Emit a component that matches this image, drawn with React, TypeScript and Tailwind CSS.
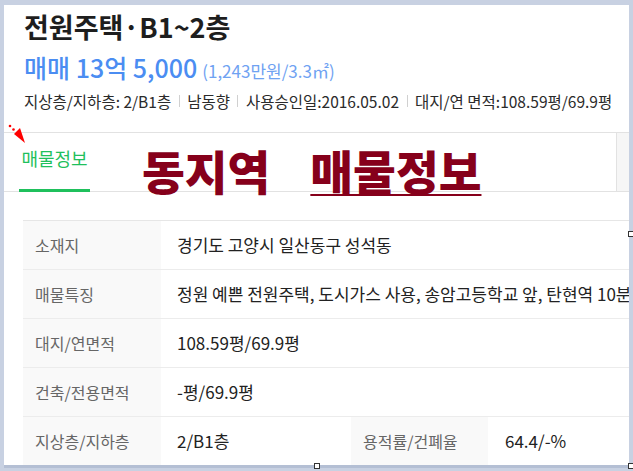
import React from 'react';

const rows: { label: string; value: string }[] = [
  { label: '소재지', value: '경기도 고양시 일산동구 성석동' },
  { label: '매물특징', value: '정원 예쁜 전원주택, 도시가스 사용, 송암고등학교 앞, 탄현역 10분' },
  { label: '대지/연면적', value: '108.59평/69.9평' },
  { label: '건축/전용면적', value: '-평/69.9평' },
];

const infos = ['지상층/지하층: 2/B1층', '남동향', '사용승인일:2016.05.02', '대지/연 면적:108.59평/69.9평'];

function Handle({ className }: { className: string }) {
  return <div className={`absolute w-[6px] h-[6px] bg-white border border-[#333] ${className}`} />;
}

export default function App() {
  return (
    <div className="relative w-[633px] h-[471px] overflow-hidden bg-[#c8d1e2] font-['Noto_Sans_CJK_KR',sans-serif]">
      <div className="ml-[4px] mt-[5px] w-[625px] h-[460px] bg-white overflow-hidden shadow-[0_3px_0_#b4bfd4]">
        {/* Header */}
        <div className="pl-[20px] pt-[4px]">
          <h1 className="text-[27px] leading-[36px] font-bold text-[#1e1e1e]">전원주택·B1~2층</h1>
          <div className="mt-[6px] flex items-baseline h-[32px] leading-[32px]">
            <span className="text-[25px] font-medium text-[#4b8df2]">매매 13억 5,000</span>
            <span className="ml-[5px] text-[17px] text-[#6fa2f2]">(1,243만원/3.3㎡)</span>
          </div>
          <div className="mt-[8px] flex items-center text-[15.5px] leading-[20px] text-[#2a2a2a] whitespace-nowrap">
            {infos.map((t, i) => (
              <React.Fragment key={t}>
                {i > 0 && <span className="mx-[7.5px] h-[12px] w-px bg-[#d0d0d0]" />}
                <span>{t}</span>
              </React.Fragment>
            ))}
          </div>
        </div>

        {/* Tabs */}
        <div className="mt-[21px] flex h-[60px] border-y border-[#e2e2e2]">
          <div className="ml-[15px] w-[71px] flex flex-col items-center justify-end">
            <span className="text-[18px] leading-[20px] text-[#1fc05c] mb-[21px]">매물정보</span>
            <div className="h-[3px] w-full bg-[#1fc05c] mb-[-1px]" />
          </div>
          <div className="ml-auto w-[13px] border-l border-[#e2e2e2] bg-[#f6f6f6]" />
        </div>

        {/* Table */}
        <div className="mt-[28px] ml-[19px] w-[640px] border-t border-[#e6e6e6]">
          {rows.map((r) => (
            <div key={r.label} className="flex h-[49px] border-b border-[#ececec]">
              <div className="w-[138px] shrink-0 bg-[#f9f9f9] pl-[12px] flex items-center text-[16px] text-[#666]">{r.label}</div>
              <div className="pl-[16px] flex items-center text-[17px] text-[#222] whitespace-nowrap">{r.value}</div>
            </div>
          ))}
          <div className="flex h-[49px] border-b border-[#ececec]">
            <div className="w-[138px] shrink-0 bg-[#f9f9f9] pl-[12px] flex items-center text-[16px] text-[#666]">지상층/지하층</div>
            <div className="w-[190px] shrink-0 pl-[16px] flex items-center text-[17px] text-[#222]">2/B1층</div>
            <div className="w-[137px] shrink-0 bg-[#f9f9f9] pl-[12px] flex items-center text-[16px] text-[#666]">용적률/건폐율</div>
            <div className="pl-[17px] flex items-center text-[17px] text-[#222]">64.4/-%</div>
          </div>
        </div>
      </div>

      {/* Annotation overlay */}
      <svg className="absolute left-[6px] top-[122px]" width="24" height="24" viewBox="0 0 24 24">
        <circle cx="4" cy="4" r="1.3" fill="#f00" />
        <circle cx="7.5" cy="7.5" r="1.3" fill="#f00" />
        <polygon points="8,12 14,6 19,21" fill="#f00" />
      </svg>
      <div className="absolute left-[142px] top-[140px] flex gap-[40px] text-[46.5px] leading-[60px] font-black text-[#86001b]">
        <span>동지역</span>
        <span className="underline decoration-[2px] underline-offset-[4px]">매물정보</span>
      </div>

      {/* Selection handles */}
      <Handle className="left-[314px] top-[463px]" />
      <Handle className="left-[628px] top-[463px]" />
      <Handle className="left-[628px] top-[231px]" />
    </div>
  );
}
